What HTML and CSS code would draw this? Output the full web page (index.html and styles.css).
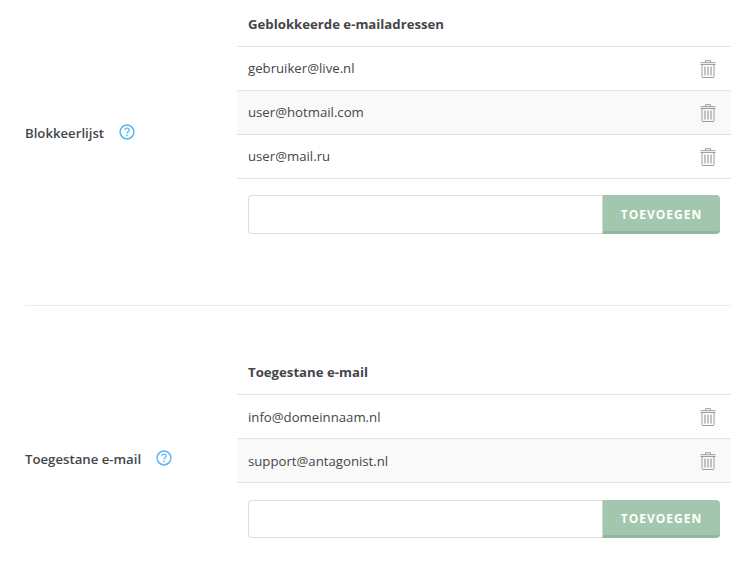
FILE: index.html
```html
<!DOCTYPE html>
<html lang="nl">
<head>
    <meta charset="UTF-8">
    <meta name="viewport" content="width=device-width, initial-scale=1.0">
    <title>E-mail filters</title>
    <link rel="stylesheet" href="styles.css">
</head>
<body>
    <svg class="icon-defs" width="0" height="0" aria-hidden="true">
        <symbol id="trash" viewBox="0 0 16 18">
            <path d="M5.5 2.5V.7h5v1.8M.5 2.7h15M.5 4.5h15M2 4.5v12.3c0 .4.3.7.7.7h10.6c.4 0 .7-.3.7-.7V4.5" fill="none" stroke="currentColor" stroke-width="1"/>
            <path d="M5 6.5v9M8 6.5v9M11 6.5v9" fill="none" stroke="currentColor" stroke-width="1.2"/>
        </symbol>
        <symbol id="help" viewBox="0 0 16 16">
            <circle cx="8" cy="8" r="6.9" fill="none" stroke="currentColor" stroke-width="1.5"/>
            <path d="M5.8 6.3c0-1.3 1-2.1 2.2-2.1s2.2.8 2.2 1.9c0 1.6-2.2 1.7-2.2 3.4" fill="none" stroke="currentColor" stroke-width="1.3"/>
            <circle cx="8" cy="11.4" r=".85" fill="currentColor"/>
        </symbol>
    </svg>

    <main class="settings">
        <section class="setting setting-first">
            <div class="setting-label">
                <span>Blokkeerlijst</span>
                <svg class="help-icon"><use href="#help"/></svg>
            </div>
            <div class="setting-body">
                <div class="list-title">Geblokkeerde e-mailadressen</div>
                <div class="list-row">
                    <span>gebruiker@live.nl</span>
                    <svg class="trash-icon"><use href="#trash"/></svg>
                </div>
                <div class="list-row">
                    <span>user@hotmail.com</span>
                    <svg class="trash-icon"><use href="#trash"/></svg>
                </div>
                <div class="list-row">
                    <span>user@mail.ru</span>
                    <svg class="trash-icon"><use href="#trash"/></svg>
                </div>
                <form class="add-form">
                    <input class="add-input" type="text">
                    <button class="add-button" type="button">Toevoegen</button>
                </form>
            </div>
        </section>

        <section class="setting setting-second">
            <div class="setting-label">
                <span>Toegestane e-mail</span>
                <svg class="help-icon"><use href="#help"/></svg>
            </div>
            <div class="setting-body">
                <div class="list-title">Toegestane e-mail</div>
                <div class="list-row">
                    <span>info@domeinnaam.nl</span>
                    <svg class="trash-icon"><use href="#trash"/></svg>
                </div>
                <div class="list-row">
                    <span>support@antagonist.nl</span>
                    <svg class="trash-icon"><use href="#trash"/></svg>
                </div>
                <form class="add-form add-form-low">
                    <input class="add-input" type="text">
                    <button class="add-button" type="button">Toevoegen</button>
                </form>
            </div>
        </section>
    </main>
</body>
</html>
```

FILE: styles.css
```css
* {
    margin: 0;
    padding: 0;
    box-sizing: border-box;
}

html, body {
    height: 100%;
    overflow: hidden;
}

body {
    font-family: "Open Sans", sans-serif;
    font-size: 13.2px;
    color: #43464b;
    background: #fff;
}

.icon-defs {
    position: absolute;
}

.settings {
    margin: 0 18px 0 25px;
}

.setting {
    display: flex;
    align-items: center;
    padding: 42px 0 0;
}

.setting-first {
    padding: 0 0 39px;
    border-bottom: 1px solid #ececec;
}

.setting-label {
    width: 212px;
    flex-shrink: 0;
    display: flex;
    align-items: center;
    gap: 15px;
    font-weight: 600;
}

.setting-second .setting-label {
    padding-top: 2px;
}

.help-icon {
    width: 16px;
    height: 16px;
    margin-top: -2px;
    color: #5bb8f5;
}

.setting-body {
    flex: 1;
    padding-bottom: 30px;
}

.setting-first .setting-body {
    padding-bottom: 32px;
}

.list-title {
    height: 47px;
    padding: 2px 11px 0;
    line-height: 45px;
    font-weight: 700;
    border-bottom: 1px solid #e3e3e3;
}

.list-row {
    display: flex;
    justify-content: space-between;
    align-items: center;
    height: 44px;
    padding: 0 15px 0 11px;
    border-bottom: 1px solid #e3e3e3;
}

.setting-first .list-row span {
    margin-top: -2px;
}

.list-row:nth-child(odd) {
    background: #f9f9f9;
}

.trash-icon {
    width: 16px;
    height: 18px;
    color: #9c9c9c;
}

.add-form {
    display: flex;
    height: 39px;
    margin: 16px 11px 0;
}

.add-form-low {
    height: 38px;
    margin-top: 17px;
}

.add-input {
    flex: 1;
    min-width: 0;
    border: 1px solid #dedede;
    border-right: 0;
    border-radius: 4px 0 0 4px;
    background: #fff;
}

.add-button {
    width: 118px;
    padding-top: 2px;
    border: 0;
    border-left: 1px solid #d2d8d2;
    border-bottom: 3px solid #92b8a0;
    border-radius: 0 4px 4px 0;
    background: #a3c6ae;
    color: #fff;
    font-family: inherit;
    font-size: 12px;
    font-weight: 700;
    letter-spacing: 1px;
    text-transform: uppercase;
}
```
